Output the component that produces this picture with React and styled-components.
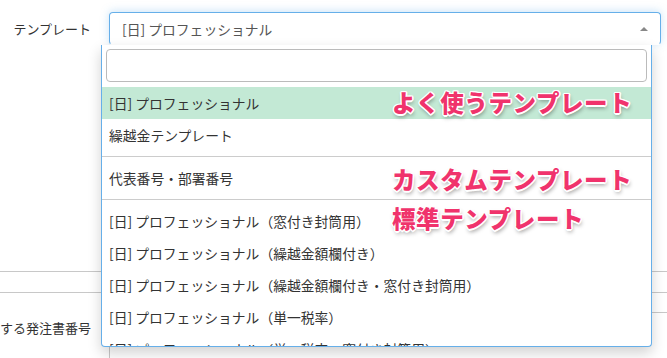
import styled, { createGlobalStyle } from "styled-components";

const GlobalStyle = createGlobalStyle`
  body {
    margin: 0;
    background: #fff;
    font-family: "Noto Sans CJK JP", "Noto Sans", sans-serif;
    color: #333;
    overflow: hidden;
  }
`;

const Page = styled.div`
  position: relative;
  width: 667px;
  height: 358px;
  padding-top: 12px;
  box-sizing: border-box;
  overflow: hidden;
`;

const Row = styled.div`
  display: flex;
  align-items: ${(p) => (p.top ? "flex-start" : "center")};
  gap: 18px;
  margin-top: ${(p) => p.mt || 0}px;
`;

const Label = styled.div`
  width: 91px;
  flex: none;
  display: flex;
  justify-content: flex-end;
  white-space: nowrap;
  font-size: 13px;
  color: #333;
  padding-top: ${(p) => p.pt || 0}px;
`;

const SelectWrap = styled.div`
  position: relative;
  width: 552px;
`;

const SelectBox = styled.div`
  height: 33px;
  box-sizing: border-box;
  border: 1px solid #66afe9;
  border-bottom-color: #fff;
  border-radius: 4px;
  box-shadow: 0 -1px 8px rgba(102, 175, 233, 0.35);
  display: flex;
  align-items: center;
  justify-content: space-between;
  padding: 0 12px;
  font-size: 13.8px;
  color: #555;
`;

const Arrow = styled.span`
  width: 0;
  height: 0;
  border-left: 4px solid transparent;
  border-right: 4px solid transparent;
  border-bottom: 4px solid #888;
`;

const Dropdown = styled.div`
  position: absolute;
  left: -8px;
  top: 33px;
  width: 551px;
  height: 302px;
  box-sizing: border-box;
  background: #fff;
  border: 1px solid #66afe9;
  border-top: none;
  border-radius: 0 0 4px 4px;
  box-shadow: 0 6px 14px rgba(0, 0, 0, 0.18);
  overflow: hidden;
  z-index: 5;
`;

const Search = styled.div`
  margin: 4px 4px 5px;
  height: 33px;
  box-sizing: border-box;
  border: 1px solid #bbb;
  border-radius: 4px;
`;

const Group = styled.div`
  padding: ${(p) => (p.first ? "0 0 5px" : "5px 0")};
  border-top: ${(p) => (p.first ? "none" : "1px solid #ccc")};
`;

const Option = styled.div`
  height: 32px;
  display: flex;
  align-items: center;
  padding: 0 7px;
  font-size: 13.8px;
  color: #333;
  white-space: nowrap;
  background: ${(p) => (p.active ? "#c3e9d5" : "transparent")};
`;

const Section = styled.div`
  margin-top: 226px;
  height: 20px;
  border-top: 1px solid #c8c8c8;
  border-bottom: 1px solid #c8c8c8;
`;

const Textarea = styled.div`
  width: 620px;
  height: 80px;
  flex: none;
  border: 1px solid #c8c8c8;
  border-radius: 4px;
`;

const Note = styled.div`
  position: absolute;
  left: 392px;
  top: ${(p) => p.y}px;
  font-size: 23.5px;
  font-weight: 900;
  color: #f0336c;
  white-space: nowrap;
  letter-spacing: 0.6px;
  line-height: 1;
  z-index: 10;
  text-shadow: 1.5px 0 0 #fff, -1.5px 0 0 #fff, 0 1.5px 0 #fff, 0 -1.5px 0 #fff,
    1px 1px 0 #fff, -1px -1px 0 #fff, 1px -1px 0 #fff, -1px 1px 0 #fff,
    1px 3px 4px rgba(0, 0, 0, 0.4);
`;

const favorites = ["[日] プロフェッショナル", "繰越金テンプレート"];
const custom = ["代表番号・部署番号"];
const standard = [
  "[日] プロフェッショナル（窓付き封筒用）",
  "[日] プロフェッショナル（繰越金額欄付き）",
  "[日] プロフェッショナル（繰越金額欄付き・窓付き封筒用）",
  "[日] プロフェッショナル（単一税率）",
  "[日] プロフェッショナル（単一税率・窓付き封筒用）",
];

export default function App() {
  return (
    <Page>
      <GlobalStyle />
      <Row>
        <Label>テンプレート</Label>
        <SelectWrap>
          <SelectBox>
            <span>[日] プロフェッショナル</span>
            <Arrow />
          </SelectBox>
          <Dropdown>
            <Search />
            <Group first>
              {favorites.map((t, i) => (
                <Option key={t} active={i === 0}>
                  {t}
                </Option>
              ))}
            </Group>
            <Group>
              {custom.map((t) => (
                <Option key={t}>{t}</Option>
              ))}
            </Group>
            <Group>
              {standard.map((t) => (
                <Option key={t}>{t}</Option>
              ))}
            </Group>
          </Dropdown>
        </SelectWrap>
      </Row>
      <Section />
      <Row top mt={19}>
        <Label pt={6}>紐付けする発注書番号</Label>
        <Textarea />
      </Row>
      <Note y={91}>よく使うテンプレート</Note>
      <Note y={168}>カスタムテンプレート</Note>
      <Note y={207}>標準テンプレート</Note>
    </Page>
  );
}
